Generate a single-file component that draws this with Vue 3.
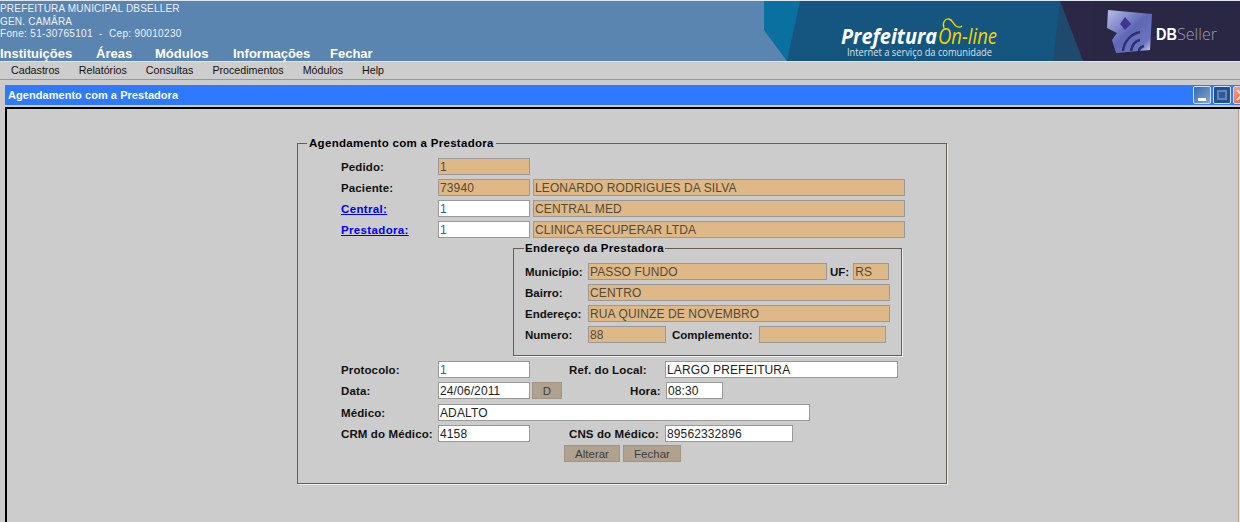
<script setup>
const navItems = ['Instituições', 'Áreas', 'Módulos', 'Informações', 'Fechar']
const menuItems = ['Cadastros', 'Relatórios', 'Consultas', 'Procedimentos', 'Módulos', 'Help']
</script>

<template>
  <div class="page">
    <header class="top">
      <div class="top-left">
        <div class="org">
          <div>PREFEITURA MUNICIPAL DBSELLER</div>
          <div>GEN. CAMÂRA</div>
          <div class="fone">Fone: 51-30765101 &nbsp;-&nbsp; Cep: 90010230</div>
        </div>
        <nav class="nav">
          <a v-for="n in navItems" :key="n">{{ n }}</a>
        </nav>
      </div>
      <svg class="banner" width="476" height="60" viewBox="0 0 476 60">
        <defs>
          <linearGradient id="cube" x1="0" y1="0" x2="1" y2="1">
            <stop offset="0" stop-color="#b9c0ec" />
            <stop offset="0.5" stop-color="#5f68b4" />
            <stop offset="0.8" stop-color="#6a74c0" />
            <stop offset="1" stop-color="#dfe2f6" />
          </linearGradient>
        </defs>
        <rect width="476" height="60" fill="#14567f" />
        <polygon points="0,0 36,0 23,60 0,29" fill="#0a709f" />
        <polygon points="0,29 23,60 0,60" fill="#5a85b1" />
        <polygon points="296,0 319,60 289,60" fill="#1f4a6d" />
        <polygon points="296,0 476,0 476,60 319,60" fill="#2d2747" />
        <polygon points="330,0 476,0 476,60 330,60" fill="#2a2745" />
        <text x="77" y="43" class="pf" textLength="96" lengthAdjust="spacingAndGlyphs">Prefeitura</text>
        <text x="174" y="43" class="ol" textLength="59" lengthAdjust="spacingAndGlyphs">On-line</text>
        <path d="M180 27c-2-5 1-10 5-9s4 5 7 7 5 1 6 0" fill="none" stroke="#f2d500" stroke-width="1.3" />
        <text x="83" y="55" class="tag" textLength="145" lengthAdjust="spacingAndGlyphs">Internet a serviço da comunidade</text>
        <polygon points="344,9 388,13 386,49 352,52 348,39 353,32 343,27" fill="url(#cube)" />
        <polygon points="361,16 367,23 361,29 356,23" fill="#3d3590" />
        <path d="M359 50c1-10 8-17 17-19M367 50c1-6 4-10 9-11M375 50c0-2 2-4 5-5" fill="none" stroke="#2f2f70" stroke-width="2.4" />
        <text x="392" y="39" class="db" textLength="21" lengthAdjust="spacingAndGlyphs">DB</text>
        <text x="413" y="39" class="seller" textLength="40" lengthAdjust="spacingAndGlyphs">Seller</text>
      </svg>
    </header>

    <div class="menu">
      <a v-for="m in menuItems" :key="m">{{ m }}</a>
    </div>

    <section class="window">
      <div class="titlebar">
        <span class="title">Agendamento com a Prestadora</span>
        <div class="controls">
          <button class="wb wb-min"><i></i></button>
          <button class="wb wb-max"><i></i></button>
          <button class="wb wb-close">
            <svg width="16" height="16" viewBox="0 0 16 16"><path d="M3 3l10 10M13 3L3 13" stroke="#fff" stroke-width="2" opacity="0.75" /></svg>
          </button>
        </div>
      </div>
      <div class="content">
        <div class="edge"></div>
        <fieldset class="main">
          <legend>Agendamento com a Prestadora</legend>
          <div class="main-body">
            <div class="row">
              <label class="lb">Pedido:</label>
              <div class="f ro w92">1</div>
            </div>
            <div class="row">
              <label class="lb">Paciente:</label>
              <div class="f ro w92">73940</div>
              <div class="f ro w372 ml3">LEONARDO RODRIGUES DA SILVA</div>
            </div>
            <div class="row">
              <a class="lb link">Central:</a>
              <div class="f w92"><span class="blue">1</span></div>
              <div class="f ro w372 ml3">CENTRAL MED</div>
            </div>
            <div class="row">
              <a class="lb link">Prestadora:</a>
              <div class="f w92"><span class="blue">1</span></div>
              <div class="f ro w372 ml3">CLINICA RECUPERAR LTDA</div>
            </div>

            <fieldset class="addr">
              <legend>Endereço da Prestadora</legend>
              <div class="row">
                <label class="lb2">Município:</label>
                <div class="f ro w239">PASSO FUNDO</div>
                <label class="lb uf">UF:</label>
                <div class="f ro w36">RS</div>
              </div>
              <div class="row">
                <label class="lb2">Bairro:</label>
                <div class="f ro w302">CENTRO</div>
              </div>
              <div class="row">
                <label class="lb2">Endereço:</label>
                <div class="f ro w302">RUA QUINZE DE NOVEMBRO</div>
              </div>
              <div class="row">
                <label class="lb2">Numero:</label>
                <div class="f ro w78">88</div>
                <label class="lb comp">Complemento:</label>
                <div class="f ro w127"></div>
              </div>
            </fieldset>

            <div class="row r-after">
              <label class="lb">Protocolo:</label>
              <div class="f w92"><span class="blue">1</span></div>
              <label class="lb side">Ref. do Local:</label>
              <div class="f w233">LARGO PREFEITURA</div>
            </div>
            <div class="row">
              <label class="lb">Data:</label>
              <div class="f w92">24/06/2011</div>
              <button class="btn d">D</button>
              <label class="lb hora">Hora:</label>
              <div class="f w57">08:30</div>
            </div>
            <div class="row r-medico">
              <label class="lb">Médico:</label>
              <div class="f w372">ADALTO</div>
            </div>
            <div class="row">
              <label class="lb">CRM do Médico:</label>
              <div class="f w92">4158</div>
              <label class="lb side">CNS do Médico:</label>
              <div class="f w128">89562332896</div>
            </div>
            <div class="row actions">
              <button class="btn alt">Alterar</button>
              <button class="btn fec">Fechar</button>
            </div>
          </div>
        </fieldset>
      </div>
    </section>
  </div>
</template>

<style>
html, body { margin: 0; background: #cccccc; overflow: hidden; }
</style>

<style scoped>
.page {
  width: 1240px;
  height: 522px;
  overflow: hidden;
  background: #cccccc;
  font-family: "Liberation Sans", Arial, sans-serif;
}
.top {
  display: flex;
  height: 60px;
  border-top: 1px solid #dfe6ee;
  background: #5a85b1;
}
.top-left {
  flex: 1;
  min-width: 0;
  color: #fff;
}
.org {
  height: 39px;
  padding-top: 2px;
  box-sizing: border-box;
  font-size: 10px;
  line-height: 12.7px;
  letter-spacing: 0.2px;
  color: #eef2f7;
  white-space: nowrap;
}
.fone { letter-spacing: 0.33px; }
.nav {
  display: flex;
  height: 21px;
  align-items: center;
  font-size: 13px;
  font-weight: bold;
  padding-top: 5px;
  box-sizing: border-box;
}
.nav a:nth-child(1) { width: 96px; }
.nav a:nth-child(2) { width: 59px; }
.nav a:nth-child(3) { width: 78px; }
.nav a:nth-child(4) { width: 97px; }
.banner { display: block; flex: none; }
.pf { font: italic bold 21px "Open Sans", sans-serif; fill: #fff; }
.ol { font: italic 21px "Open Sans", sans-serif; fill: #f2d500; }
.tag { font: 10px "Open Sans", sans-serif; fill: #d8e2ea; }
.db { font: bold 17px "Liberation Sans", sans-serif; fill: #fff; }
.seller { font: 300 17px "Open Sans", sans-serif; fill: #9f9eb3; }

.menu {
  display: flex;
  gap: 19px;
  height: 19px;
  align-items: center;
  padding: 0 0 2px 11px;
  box-sizing: border-box;
  font-size: 10.7px;
  color: #111;
  background: #cdcdcd;
  border-top: 1px solid #e4e4e4;
  border-bottom: 1px solid #999;
}
.window {
  margin: 5px 0 0 5px;
  width: 1300px;
}
.titlebar {
  display: flex;
  height: 20px;
  align-items: center;
  background: #2e79ff;
  padding-left: 3px;
  color: #fff;
  font-size: 11px;
  font-weight: bold;
  letter-spacing: 0.05px;
  margin-bottom: 2px;
}
.title { flex: 1; }
.controls {
  display: flex;
  gap: 2px;
  margin-right: 54px;
}
.wb {
  position: relative;
  display: block;
  width: 18px;
  height: 18px;
  padding: 0;
  border: 1px solid #cfe0ff;
  border-radius: 2px;
  box-sizing: border-box;
  overflow: hidden;
}
.wb-min { background: linear-gradient(135deg, #2f6ab8, #8ea5c4); }
.wb-min i {
  position: absolute;
  left: 4px;
  bottom: 2px;
  width: 8px;
  height: 3px;
  background: #fff;
}
.wb-max { background: #23508f; }
.wb-max i {
  position: absolute;
  left: 3px;
  top: 3px;
  width: 10px;
  height: 10px;
  box-sizing: border-box;
  border: 2px solid #5f86bd;
  background: #2f5a97;
}
.wb-close { background: linear-gradient(135deg, #f0a08a, #e2582f); }
.wb-close svg { display: block; }
.content {
  position: relative;
  border-top: 2px solid #000;
  border-left: 2px solid #000;
  height: 420px;
  padding: 27px 0 0 290px;
  box-sizing: border-box;
}
.edge {
  position: absolute;
  left: 1231px;
  top: 0;
  bottom: 0;
  width: 1px;
  background: #b0a28f;
  border-right: 1px solid #e6e6e6;
}
fieldset {
  margin: 0;
  min-width: 0;
  box-sizing: border-box;
  border: 1px solid #665e4e;
  box-shadow: 1px 1px 0 #eeeeee;
}
legend {
  font-size: 11.5px;
  font-weight: bold;
  color: #000;
  letter-spacing: 0.3px;
  padding: 0 2px;
  margin-left: 9px;
  line-height: 14px;
}
.main {
  width: 650px;
  height: 348px;
  padding: 0;
}
.main-body { padding: 8px 0 0 43px; }
.row {
  display: flex;
  align-items: center;
  height: 17px;
  margin-top: 4px;
}
.main-body > .row:first-child { margin-top: 0; }
.lb, .lb2 {
  flex: none;
  font-size: 11.5px;
  font-weight: bold;
  color: #111;
  white-space: nowrap;
}
.lb { width: 97px; letter-spacing: 0.12px; }
.lb2 { width: 63px; }
.link {
  color: #0000ee;
  text-decoration: underline;
  letter-spacing: 0.35px;
  cursor: pointer;
}
.f {
  flex: none;
  height: 17px;
  box-sizing: border-box;
  border: 1px solid #999;
  background: #fff;
  font-size: 12px;
  letter-spacing: 0.12px;
  line-height: 16px;
  padding-left: 1px;
  color: #222;
  white-space: nowrap;
  overflow: hidden;
}
.ro { background: #deb887; color: #554a35; }
.blue { color: #2b5e9e; }
.w92 { width: 92px; }
.w372 { width: 372px; }
.w239 { width: 239px; }
.w36 { width: 36px; }
.w302 { width: 302px; }
.w78 { width: 78px; }
.w127 { width: 127px; }
.w233 { width: 233px; }
.w57 { width: 57px; }
.w128 { width: 128px; }
.ml3 { margin-left: 3px; }
.addr {
  width: 389px;
  height: 115px;
  margin: 3px 0 0 172px;
  padding: 0 0 0 11px;
}
.addr legend {
  margin-left: -1px;
  padding: 0 1px;
}
.addr > legend + .row { margin-top: 8px; }
.addr .lb { width: auto; letter-spacing: 0; }
.uf { margin: 0 4px 0 3px; }
.comp { margin: 0 6px 0 6px; }
.r-after { margin-top: 5px; }
.r-medico { margin-top: 5px; }
.side { width: 96px !important; margin-left: 39px; }
.hora { width: 36px !important; margin-left: 68px; }
.btn {
  flex: none;
  height: 17px;
  padding: 0;
  box-sizing: border-box;
  border: 1px solid #a09484;
  background: #b0a28f;
  color: #3d3d3d;
  font-family: inherit;
  font-size: 11.5px;
}
.d { width: 30px; margin-left: 2px; }
.actions { padding-left: 223px; margin-top: 3px; }
.alt { width: 56px; }
.fec { width: 58px; margin-left: 3px; }
</style>
